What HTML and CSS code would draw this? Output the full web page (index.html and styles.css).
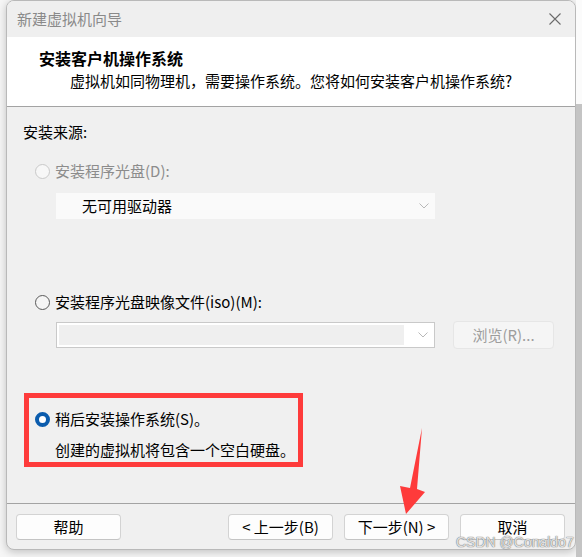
FILE: index.html
```html
<!DOCTYPE html>
<html lang="zh-CN">
<head>
	<meta charset="UTF-8">
	<title>新建虚拟机向导</title>
	<link rel="stylesheet" href="styles.css">
</head>
<body>

	<div class="desk">
		<div class="wizard">
			<div class="titlebar">
				<span class="title">新建虚拟机向导</span>
				<svg class="close" width="12" height="12" viewBox="0 0 12 12">
					<path d="M0.5 0.5 L11.5 11.5 M11.5 0.5 L0.5 11.5" stroke="#6b6b6b" stroke-width="1.1" fill="none"/>
				</svg>
			</div>

			<div class="header">
				<h3>安装客户机操作系统</h3>
				<p>虚拟机如同物理机，需要操作系统。您将如何安装客户机操作系统?</p>
			</div>

			<div class="content">
				<div class="label">安装来源:</div>

				<div class="option disabled">
					<span class="radio"></span>安装程序光盘(D):
				</div>
				<div class="select">
					<span>无可用驱动器</span>
					<svg width="10" height="6" viewBox="0 0 10 6"><path d="M0.5 0.5 L5 5 L9.5 0.5" stroke="#b8b8b8" fill="none"/></svg>
				</div>

				<div class="option second">
					<span class="radio"></span>安装程序光盘映像文件(iso)(M):
				</div>
				<div class="iso-row">
					<div class="combo">
						<div class="combo-field"></div>
						<svg width="10" height="6" viewBox="0 0 10 6"><path d="M0.5 0.5 L5 5 L9.5 0.5" stroke="#b8b8b8" fill="none"/></svg>
					</div>
					<button class="btn btn-disabled">浏览(R)...</button>
				</div>

				<div class="mark">
					<div class="option">
						<span class="radio checked"></span>稍后安装操作系统(S)。
					</div>
					<div class="note">创建的虚拟机将包含一个空白硬盘。</div>
				</div>
			</div>

			<div class="footer">
				<button class="btn">帮助</button>
				<div class="nav">
					<button class="btn">&lt; 上一步(B)</button>
					<button class="btn">下一步(N) &gt;</button>
					<button class="btn">取消</button>
				</div>
			</div>
		</div>
		<div class="desk-side"></div>
	</div>

	<svg class="arrow" width="582" height="557" viewBox="0 0 582 557">
		<polygon points="422,428 417,489 425,492 406,514 400,486 410,488" fill="#fe3b3b"/>
	</svg>

	<div class="watermark">CSDN @Conaldo7</div>

</body>
</html>
```

FILE: styles.css
```css
html, body{
	margin:0;
	padding:0;
}
body{
	position:relative;
	width:582px;
	height:557px;
	overflow:hidden;
	background:#f6f6f6;
	font-family:"Noto Sans CJK SC", "Liberation Sans", sans-serif;
	font-size:15px;
	color:#000;
}
.desk{
	display:flex;
	padding-left:6px;
}
.desk-side{
	flex:1;
	height:557px;
	background:linear-gradient(#fbfbfb 0, #fbfbfb 104px, #c4c4c4 104px, #c4c4c4 100%);
}
.wizard{
	box-sizing:border-box;
	width:570px;
	height:550px;
	border:1px solid #b9b9b9;
	border-radius:8px;
	background:#f0f0f0;
	overflow:hidden;
	display:flex;
	flex-direction:column;
	box-shadow:0 2px 8px rgba(0,0,0,0.22);
}
.titlebar{
	height:36px;
	display:flex;
	align-items:center;
	justify-content:space-between;
	padding:0 14px 0 10px;
	background:#efefef;
}
.title{
	color:#8a8a8a;
	line-height:20px;
}
.header{
	box-sizing:border-box;
	height:70px;
	background:#fff;
	border-bottom:1px solid #a3a3a3;
	padding-top:9px;
}
.header h3{
	margin:0;
	padding-left:32px;
	font-size:16px;
	line-height:24px;
	font-weight:bold;
}
.header p{
	margin:0;
	padding-left:63px;
	line-height:22px;
}
.content{
	flex:1;
	padding:15px 0 0 16px;
}
.label{
	line-height:20px;
}
.option{
	display:flex;
	align-items:center;
	line-height:20px;
	margin-top:19px;
	padding-left:12px;
}
.option.second{
	margin-top:73px;
}
.option.disabled{
	color:#8c8c8c;
}
.radio{
	box-sizing:border-box;
	width:15px;
	height:15px;
	border-radius:50%;
	border:1px solid #595959;
	background:#f5f5f5;
	margin-right:5px;
	flex:none;
}
.disabled .radio{
	border-color:#c9c9c9;
	background:#f7f7f7;
}
.radio.checked{
	border:4px solid #0b5cad;
	background:#fff;
}
.select{
	display:flex;
	align-items:center;
	justify-content:space-between;
	box-sizing:border-box;
	width:379px;
	height:26px;
	margin:12px 0 0 33px;
	padding:0 6px 0 26px;
	background:#fafafa;
	line-height:20px;
}
.iso-row{
	display:flex;
	align-items:center;
	margin:9px 0 0 33px;
}
.combo{
	display:flex;
	align-items:center;
	box-sizing:border-box;
	width:379px;
	height:26px;
	padding:2px 6px 2px 2px;
	border:1px solid #c9c9c9;
	background:#fff;
}
.combo-field{
	flex:1;
	align-self:stretch;
	background:#efefef;
	margin-right:14px;
}
.btn{
	box-sizing:border-box;
	width:105px;
	height:26px;
	padding:0;
	border:1px solid #d3d3d3;
	border-bottom-color:#c4c4c4;
	border-radius:4px;
	background:#fdfdfd;
	font-family:inherit;
	font-size:15px;
	line-height:20px;
	color:#000;
}
.btn-disabled{
	width:101px;
	height:28px;
	margin-left:18px;
	background:#f5f5f5;
	border-color:#e6e6e6;
	color:#9d9d9d;
}
.mark{
	width:279px;
	box-sizing:border-box;
	margin:44px 0 0 1px;
	border:5px solid #fe3b3b;
	padding:11px 0 2px 0;
}
.mark .option{
	margin-top:0;
	padding-left:6px;
}
.note{
	margin-top:11px;
	padding-left:26px;
	line-height:20px;
}
.footer{
	height:46px;
	box-sizing:border-box;
	border-top:1px solid #a3a3a3;
	display:flex;
	justify-content:space-between;
	padding:10px 10px 0 9px;
}
.nav{
	display:flex;
	gap:11px;
}
.arrow{
	position:absolute;
	left:0;
	top:0;
	pointer-events:none;
}
.watermark{
	position:absolute;
	left:456px;
	top:534px;
	white-space:nowrap;
	font-family:"Liberation Sans", sans-serif;
	font-size:14px;
	line-height:16px;
	color:rgba(255,255,255,0.8);
	text-shadow:0 0 1px #6f6f6f, 0 0 1px #6f6f6f;
}
```
